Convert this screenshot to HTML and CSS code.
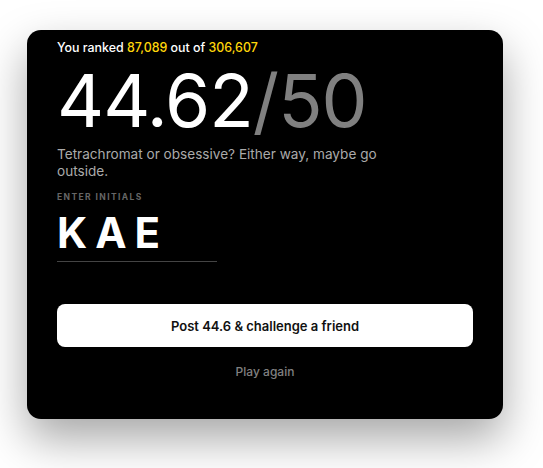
FILE: index.html
```html
<!DOCTYPE html>
<html>
<head>
<meta charset="utf-8">
<link rel="stylesheet" href="styles.css">
</head>
<body>
<div class="stage">
  <div class="card">
    <p class="rank">You ranked <span class="hl">87,089</span> out of <span class="hl">306,607</span></p>
    <div class="score">44.62<span class="total">/50</span></div>
    <p class="quip">Tetrachromat or obsessive? Either way, maybe go outside.</p>
    <div class="label">ENTER INITIALS</div>
    <div class="initials">KAE</div>
    <button class="post">Post 44.6 &amp; challenge a friend</button>
    <div class="again">Play again</div>
  </div>
</div>
</body>
</html>
```
FILE: styles.css
```css
* { box-sizing: border-box; }
html, body { margin: 0; background: #fff; }
body { font-family: Inter, "Noto Sans", sans-serif; }
.stage { padding: 30px 0 0 27px; min-height: 468px; }
.card {
  width: 476px;
  height: 389px;
  background: #000;
  border-radius: 14px;
  box-shadow: 0 20px 45px rgba(0,0,0,0.35);
  padding: 9px 30px 0 30px;
  display: flex;
  flex-direction: column;
}
.rank { margin: 0; font-size: 12.4px; line-height: 18px; color: #fff; font-weight: 500; }
.hl { color: #ffd60a; }
.score {
  font-size: 73px;
  line-height: 73px;
  letter-spacing: -1px;
  color: #fff;
  margin-top: 7px;
}
.total { color: #808080; }
.quip {
  margin: 9px 0 0 0;
  font-size: 13.6px;
  line-height: 17px;
  color: #aaa;
  max-width: 335px;
}
.label {
  margin-top: 11px;
  font-size: 8.5px;
  font-weight: 700;
  letter-spacing: 1.4px;
  color: #666;
  line-height: 12px;
}
.initials {
  margin-top: 8px;
  width: 160px;
  font-size: 42px;
  font-weight: 700;
  letter-spacing: 8px;
  color: #fff;
  line-height: 44px;
  padding-bottom: 6px;
  border-bottom: 1px solid #444;
}
.post {
  margin-top: 42px;
  height: 43px;
  border: none;
  border-radius: 8px;
  background: #fff;
  color: #111;
  font-family: inherit;
  font-size: 13px;
  font-weight: 600;
}
.again {
  margin-top: 17px;
  text-align: center;
  font-size: 12px;
  color: #808080;
  font-weight: 500;
}
```
